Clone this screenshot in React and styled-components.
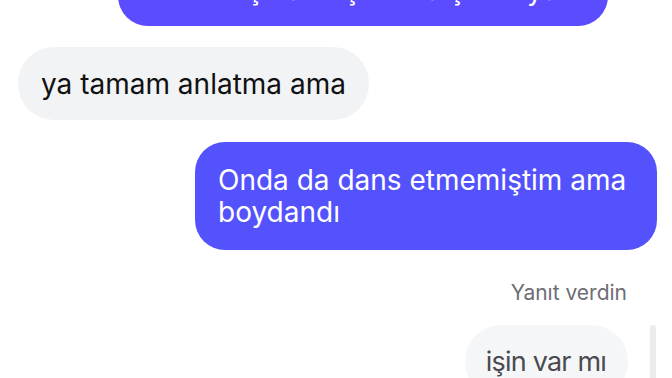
import React from 'react';
import styled, { createGlobalStyle } from 'styled-components';

const GlobalStyle = createGlobalStyle`
  html, body {
    margin: 0;
    padding: 0;
    background: #ffffff;
  }
  body {
    font-family: Inter, "Noto Sans", sans-serif;
    -webkit-font-smoothing: antialiased;
  }
`;

const Thread = styled.div`
  width: 672px;
  height: 378px;
  overflow: hidden;
  display: flex;
  flex-flow: column;
  padding: 0 15px 0 18px;
  box-sizing: border-box;
`;

const Row = styled.div`
  display: flex;
  flex-shrink: 0;
  justify-content: ${(props) => (props.mine ? 'flex-end' : 'flex-start')};
  margin-top: ${(props) => props.gap ?? 22}px;
  padding-right: ${(props) => props.inset || 0}px;
`;

const Bubble = styled.div`
  max-width: 411px;
  padding: ${(props) => (props.mine ? '22px 28px 22px 23px' : '21px 23px 20px')};
  border-radius: ${(props) => (props.mine ? 30 : 36)}px;
  font-size: 28px;
  line-height: 32px;
  background: ${(props) => (props.mine ? props.tint || '#5452fd' : '#f2f3f5')};
  color: ${(props) => (props.mine ? '#ffffff' : '#111111')};
`;

const TopBubble = styled(Bubble)`
  max-width: none;
  width: 490px;
  box-sizing: border-box;
  margin-top: -80px;
  padding-bottom: 20px;
  white-space: nowrap;
  overflow: hidden;
`;

const Note = styled.div`
  align-self: flex-end;
  flex-shrink: 0;
  margin-top: 30px;
  padding-right: 30px;
  font-size: 21px;
  line-height: 26px;
  color: #6e6e73;
`;

const ReplyRow = styled.div`
  display: flex;
  flex-shrink: 0;
  justify-content: flex-end;
  align-items: stretch;
  gap: 22px;
  margin-top: 19px;
  padding-right: 1px;
`;

const Quote = styled.div`
  padding: 21px 22px 20px 21px;
  border-radius: 36px;
  font-size: 27px;
  line-height: 32px;
  letter-spacing: -0.8px;
  background: #f5f6f8;
  color: #4a4a4f;
`;

const Bar = styled.div`
  width: 6px;
  border-radius: 3px;
  background: #ececef;
`;

export default function App() {
  return (
    <>
      <GlobalStyle />
      <Thread>
        <Row mine gap={0} inset={49}>
          <TopBubble mine tint="#5b4cff">
            ben de öyle düşündüm<br />
            bu konuşma boş bu da şimdi ya
          </TopBubble>
        </Row>
        <Row gap={21}>
          <Bubble>ya tamam anlatma ama</Bubble>
        </Row>
        <Row mine>
          <Bubble mine>Onda da dans etmemiştim ama boydandı</Bubble>
        </Row>
        <Note>Yanıt verdin</Note>
        <ReplyRow>
          <Quote>işin var mı</Quote>
          <Bar />
        </ReplyRow>
      </Thread>
    </>
  );
}
